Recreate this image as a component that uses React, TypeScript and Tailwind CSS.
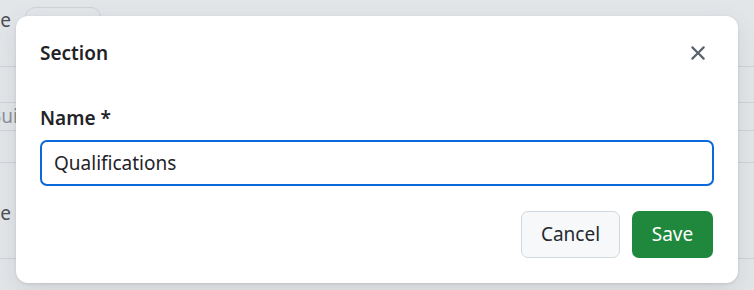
import React from 'react';

function CloseIcon() {
  return (
    <svg width="24" height="24" viewBox="0 0 16 16" fill="currentColor" aria-hidden="true">
      <path d="M3.72 3.72a.75.75 0 0 1 1.06 0L8 6.94l3.22-3.22a.749.749 0 0 1 1.275.326.749.749 0 0 1-.215.734L9.06 8l3.22 3.22a.749.749 0 0 1-.326 1.275.749.749 0 0 1-.734-.215L8 9.06l-3.22 3.22a.751.751 0 0 1-1.042-.018.751.751 0 0 1-.018-1.042L6.94 8 3.72 4.78a.75.75 0 0 1 0-1.06Z" />
    </svg>
  );
}

// page behind the overlay, only its left edge shows
function Backdrop() {
  return (
    <div className="flex flex-col text-[19px] text-[#4b5058]">
      <div className="flex h-[67px] items-start gap-[14px] border-b border-[#cfd3d8] pt-[7px]">
        <div className="flex w-[11px] justify-end">
          <span className="whitespace-nowrap leading-[26px]">Name</span>
        </div>
        <div className="h-[34px] w-[76px] rounded-[10px] border border-[#cfd3d8]" />
      </div>
      <div className="h-[36px] border-b border-[#cfd3d8]" />
      <div className="flex h-[28px] items-center border-b border-[#cfd3d8] text-[#8a9099]">
        <span className="-ml-[11px] whitespace-nowrap">Build</span>
      </div>
      <div className="h-[32px] border-b border-[#cfd3d8]" />
      <div className="flex h-[96px] items-start border-b border-[#cfd3d8] pt-[36px]">
        <div className="flex w-[11px] justify-end">
          <span className="whitespace-nowrap">Name</span>
        </div>
      </div>
    </div>
  );
}

export default function App() {
  return (
    <div
      className="relative h-[290px] w-[754px] overflow-hidden bg-[#e3e6e9]"
      style={{ fontFamily: '"Noto Sans", "Open Sans", sans-serif' }}
    >
      <Backdrop />
      <div className="absolute left-[16px] top-[16px] flex h-[267px] w-[722px] flex-col rounded-[12px] bg-white shadow-[0_1px_3px_rgba(31,35,40,0.12),0_8px_24px_rgba(66,74,83,0.12)]">
        <div className="flex items-center justify-between pl-[24px] pr-[25px] pt-[22px]">
          <h2 className="text-[19px] font-semibold leading-[30px] text-[#1f2328]">Section</h2>
          <button className="flex h-[30px] w-[30px] items-center justify-center text-[#59636e]">
            <CloseIcon />
          </button>
        </div>
        <div className="flex flex-col px-[24px] pt-[36px]">
          <label className="text-[19px] font-semibold leading-[28px] text-[#1f2328]">Name *</label>
          <input
            defaultValue="Qualifications"
            className="mt-[8px] h-[46px] w-full rounded-[7px] border-2 border-[#0969da] px-[12px] text-[19px] text-[#1f2328] outline-none"
          />
        </div>
        <div className="flex justify-end gap-[12px] px-[25px] pt-[25px]">
          <button className="h-[47px] w-[99px] rounded-[7px] border border-[#d1d9e0] bg-[#f6f8fa] text-[19px] text-[#25292e]">
            Cancel
          </button>
          <button className="h-[47px] w-[81px] rounded-[7px] bg-[#1f883d] text-[19px] text-white">
            Save
          </button>
        </div>
      </div>
    </div>
  );
}
